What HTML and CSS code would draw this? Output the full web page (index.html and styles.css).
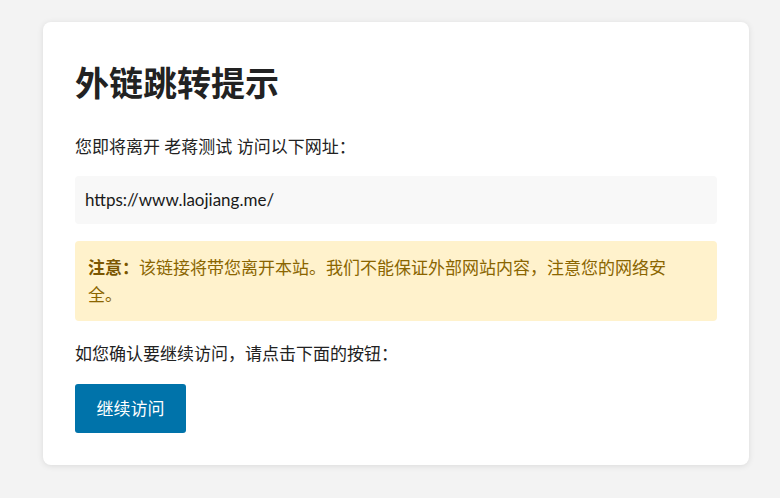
FILE: index.html
```html
<!DOCTYPE html>
<html lang="zh-CN">
<head>
  <meta charset="UTF-8" />
  <title>外链跳转提示</title>
  <link rel="stylesheet" href="styles.css">
</head>
<body>

<div class="container">
  <h1>外链跳转提示</h1>

  <p>您即将离开 老蒋测试 访问以下网址：</p>

  <div class="url-box">https://www.laojiang.me/</div>

  <div class="warning">
    <strong>注意：</strong>该链接将带您离开本站。我们不能保证外部网站内容，注意您的网络安全。
  </div>

  <p class="confirm">如您确认要继续访问，请点击下面的按钮：</p>

  <a class="button" href="https://www.laojiang.me/">继续访问</a>
</div>

</body>
</html>
```

FILE: styles.css
```css
body {
  font-family: Lato, "Noto Sans CJK SC", sans-serif;
  font-size: 17px;
  line-height: 1.6;
  color: #222;
  margin: 0;
  padding: 22px 0 34px;
  background-color: #f3f3f3;
}
.container {
  width: 706px;
  box-sizing: border-box;
  margin-left: 43px;
  background: #fff;
  padding: 32px;
  border-radius: 8px;
  box-shadow: 0 1px 6px rgba(0,0,0,0.1);
}
h1 {
  font-size: 34px;
  line-height: 1.6;
  font-weight: bold;
  color: #222;
  margin: 2px 0 23px;
}
p {
  margin: 0 0 15px;
}
.url-box {
  background: #f8f8f8;
  padding: 10px;
  line-height: 28px;
  border-radius: 4px;
  margin-bottom: 17px;
  color: #1a1a1a;
}
.warning {
  background: #fff2cc;
  color: #8a6500;
  padding: 13px 18px 13px 13px;
  border-radius: 4px;
  margin-bottom: 19px;
}
.warning strong {
  color: #7a5600;
}
.confirm {
  margin-bottom: 17px;
}
.button {
  display: inline-block;
  background-color: #0073aa;
  color: #fff;
  text-decoration: none;
  padding: 11px 21.5px;
  line-height: 27px;
  border-radius: 3px;
}
```
